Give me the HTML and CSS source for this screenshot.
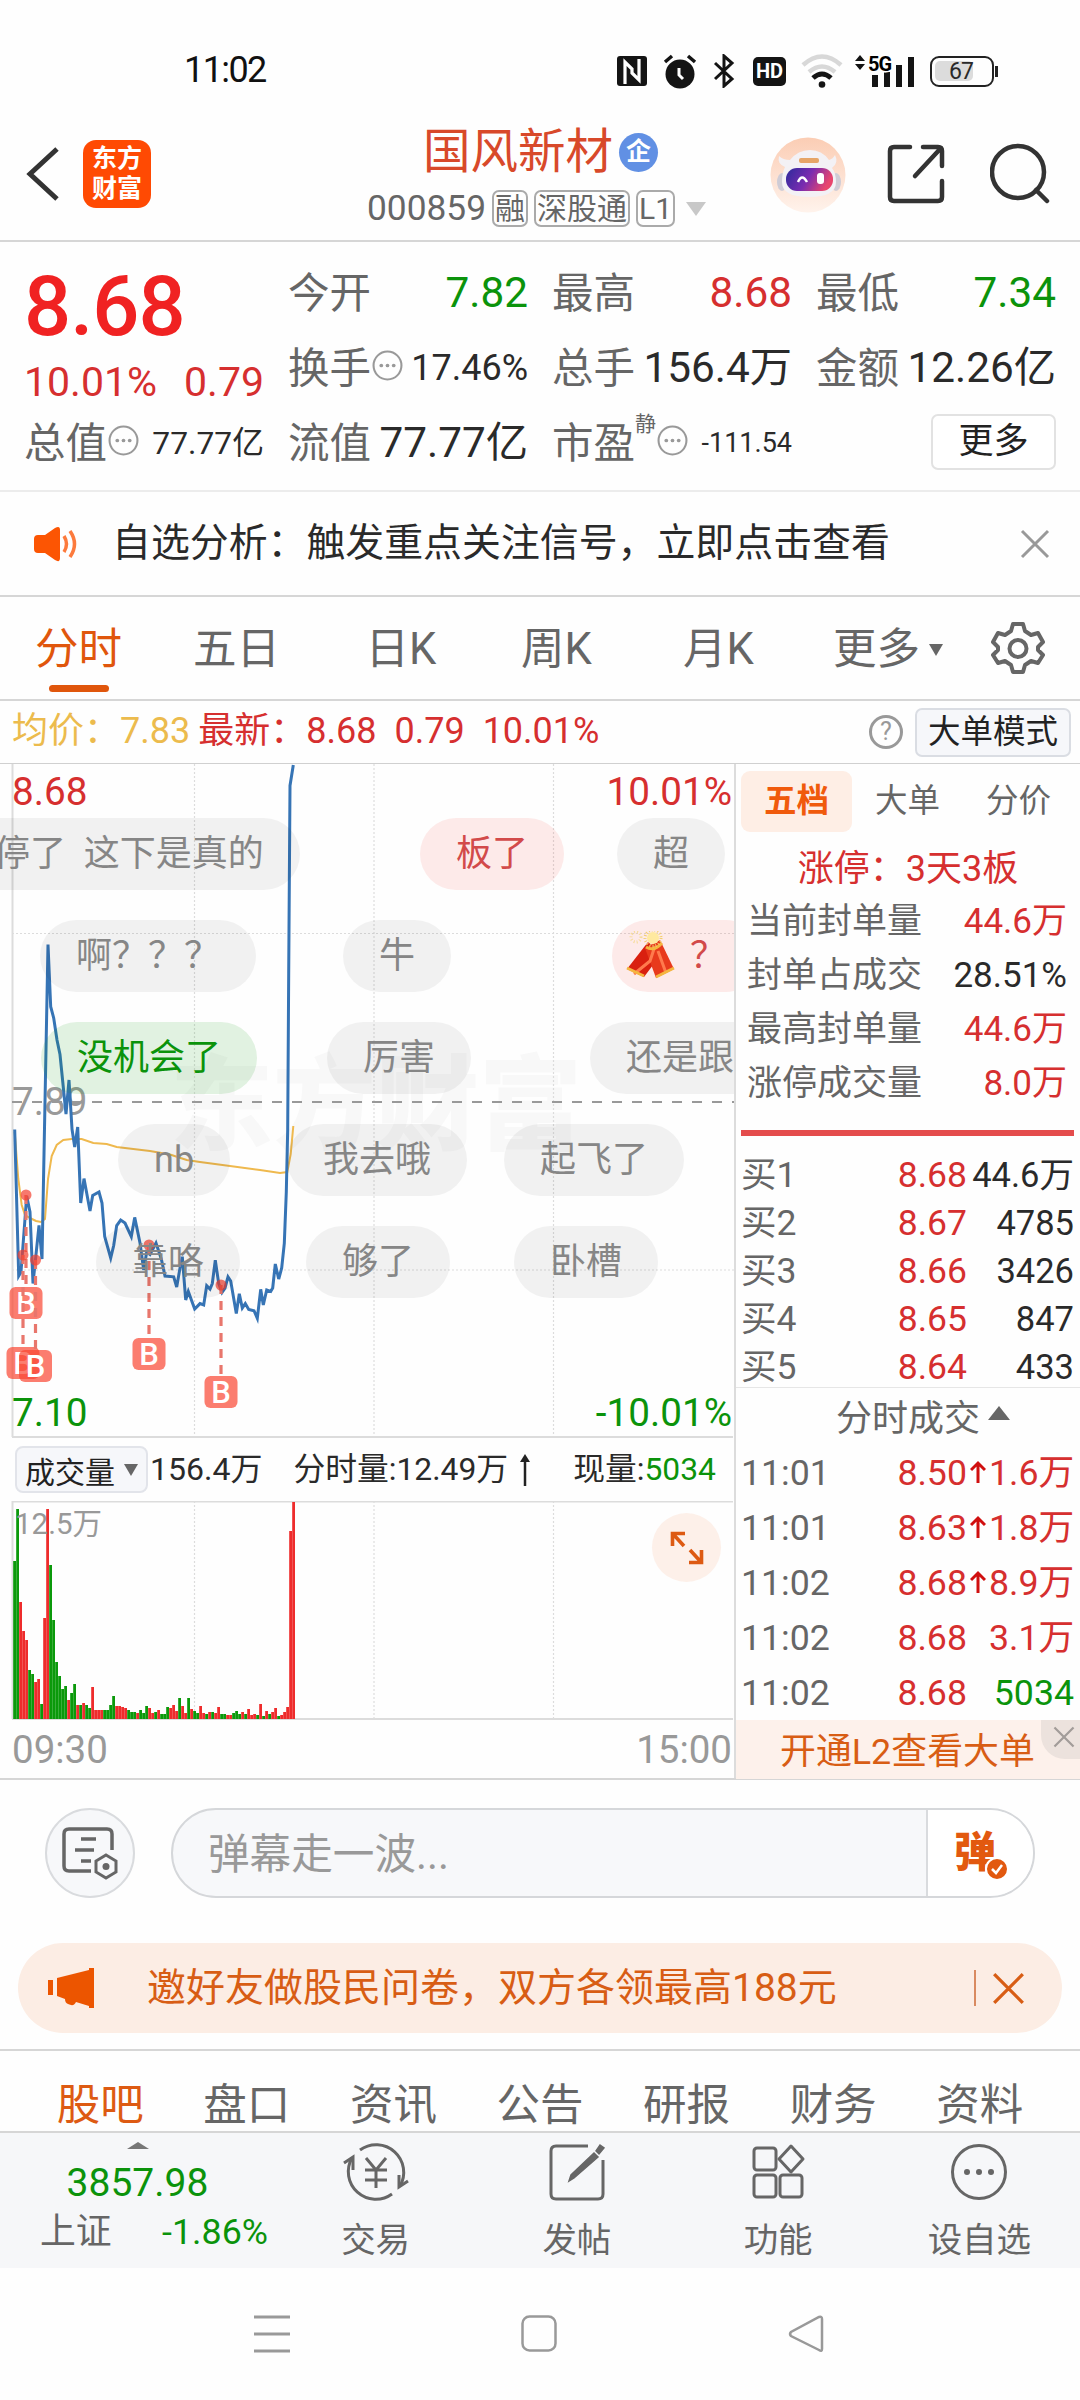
FILE: index.html
```html
<!DOCTYPE html>
<html lang="zh-CN">
<head>
	<meta charset="utf-8">
	<title>国风新材 000859</title>
	<link rel="stylesheet" href="styles.css">
</head>
<body>
	<svg class="defs" width="0" height="0">
		<symbol id="dots" viewBox="0 0 30 30">
			<circle cx="15" cy="15" r="13.5" fill="none" stroke="#999" stroke-width="2"/>
			<circle cx="9" cy="15" r="1.8" fill="#999"/><circle cx="15" cy="15" r="1.8" fill="#999"/><circle cx="21" cy="15" r="1.8" fill="#999"/>
		</symbol>
		<symbol id="cross" viewBox="0 0 30 30">
			<path d="M2 2L28 28M28 2L2 28" fill="none" stroke="currentColor" stroke-width="3"/>
		</symbol>
		<symbol id="up" viewBox="0 0 16 24">
			<path d="M8 23V3M1 10L8 3L15 10" fill="none" stroke="#d00f0f" stroke-width="3"/>
		</symbol>
	</svg>

	<div class="statusBar">
		<span class="clock">11:02</span>
		<div class="sysIcons">
			<svg class="nfc" width="30" height="31" viewBox="0 0 30 31"><rect width="30" height="30" rx="3" fill="#141414"/><path d="M8 28V6L15 13V17L22 24V3" fill="none" stroke="#fff" stroke-width="3.200"/></svg>
			<svg class="alarm" width="34" height="35" viewBox="0 0 34 35"><circle cx="17" cy="20" r="14.500" fill="#141414"/><path d="M2 8L9 2M32 8L25 2" stroke="#141414" stroke-width="3.500"/><path d="M16 14V21L20 25" fill="none" stroke="#fff" stroke-width="3"/></svg>
			<svg class="bt" width="22" height="34" viewBox="0 0 22 34"><path d="M2 9L19 25L11 32V2L19 9L2 25" fill="none" stroke="#141414" stroke-width="3"/></svg>
			<span class="hd">HD</span>
			<svg class="wifi" width="42" height="34" viewBox="0 0 42 34"><path d="M2 11Q21 -6 40 11M8 18Q21 7 34 18" fill="none" stroke="#d8d8d8" stroke-width="4.500"/><path d="M12 24Q21 16 30 24" fill="none" stroke="#141414" stroke-width="5"/><circle cx="21" cy="30.500" r="3.300" fill="#141414"/></svg>
			<svg class="signal" width="60" height="34" viewBox="0 0 60 34"><path d="M0 7L5 1L10 7ZM0 10L5 16L10 10Z" fill="#141414"/><path d="M20 21V33M32 18V33M44 11V33M56 3V33" stroke="#141414" stroke-width="6"/><text x="13" y="17" class="fiveG">5G</text></svg>
			<div class="battery"><span>67</span></div>
		</div>
	</div>

	<div class="header">
		<svg class="back" width="34" height="56" viewBox="0 0 34 56"><path d="M31 3L4 28L31 53" fill="none" stroke="#333" stroke-width="5"/></svg>
		<div class="logo">东方<br>财富</div>
		<div class="stock">
			<div class="stockName">国风新材<span class="qi">企</span></div>
			<div class="stockCode">000859<span class="tag">融</span><span class="tag">深股通</span><span class="tag">L1</span><i class="tri"></i></div>
		</div>
		<svg class="robot" width="76" height="76" viewBox="0 0 76 76">
			<defs>
				<linearGradient id="halo" x1="0" y1="0" x2="0" y2="1"><stop offset="0" stop-color="#fbcdb4"/><stop offset="1" stop-color="#fff3ec"/></linearGradient>
				<linearGradient id="visor" x1="0" y1="0" x2="1" y2=".3"><stop offset="0" stop-color="#2c2a9c"/><stop offset=".55" stop-color="#7a2cb0"/><stop offset="1" stop-color="#e8456e"/></linearGradient>
			</defs>
			<circle cx="38" cy="38" r="37.500" fill="url(#halo)"/>
			<ellipse cx="12" cy="45" rx="5" ry="9" fill="#cfccd6"/><ellipse cx="66" cy="45" rx="5" ry="9" fill="#cfccd6"/>
			<path d="M15 30Q7 27 9 19Q13 23 20 23Q28 13 40 13Q52 13 59 23Q63 22 65 18Q69 26 62 31Q66 36 66 45Q66 60 39 60Q12 60 12 45Q12 36 15 30Z" fill="#f3f1f5"/>
			<rect x="29" y="21" width="20" height="5" rx="2" fill="#e6a568"/>
			<rect x="16" y="31" width="47" height="23" rx="11" fill="url(#visor)"/>
			<path d="M28 45Q32 36 37 45" fill="none" stroke="#fff" stroke-width="2.500"/><rect x="47" y="36" width="7" height="11" rx="3" fill="#fff"/>
		</svg>
		<svg class="share" width="58" height="60" viewBox="0 0 58 60"><path d="M23 3H7Q3 3 3 7V53Q3 57 7 57H51Q55 57 55 53V37M36 3H51Q55 3 55 7V22M54 4L28 32" fill="none" stroke="#333" stroke-width="4.500" stroke-linecap="round"/></svg>
		<svg class="search" width="60" height="62" viewBox="0 0 60 62"><circle cx="28" cy="29" r="26" fill="none" stroke="#333" stroke-width="4.500"/><path d="M46 47L57 58" stroke="#333" stroke-width="4.500" stroke-linecap="round"/></svg>
	</div>

	<div class="quote">
		<div class="quoteCol first">
			<div class="bigPrice">8.68</div>
			<div class="change red"><span>10.01%</span><span>0.79</span></div>
			<div class="cell"><label>总值</label><svg class="dots"><use href="#dots"/></svg><b class="s31">77.77亿</b></div>
		</div>
		<div class="quoteCol">
			<div class="cell"><label>今开</label><b class="green">7.82</b></div>
			<div class="cell"><label>换手</label><svg class="dots"><use href="#dots"/></svg><b class="s35">17.46%</b></div>
			<div class="cell"><label>流值</label><b>77.77亿</b></div>
		</div>
		<div class="quoteCol">
			<div class="cell"><label>最高</label><b class="red">8.68</b></div>
			<div class="cell"><label>总手</label><b>156.4万</b></div>
			<div class="cell"><label>市盈</label><sup>静</sup><svg class="dots"><use href="#dots"/></svg><b class="s27">-111.54</b></div>
		</div>
		<div class="quoteCol">
			<div class="cell"><label>最低</label><b class="green">7.34</b></div>
			<div class="cell"><label>金额</label><b>12.26亿</b></div>
			<div class="cell"><button class="moreBtn">更多</button></div>
		</div>
	</div>

	<div class="notice">
		<svg width="46" height="36" viewBox="0 0 46 36"><path d="M1 13Q1 9 5 9H12L22 2Q27 -1 27 4V32Q27 37 22 34L12 27H5Q1 27 1 23Z" fill="#fc5503"/><path d="M31 10Q36 18 31 26M37 5Q46 18 37 31" fill="none" stroke="#fc7a3c" stroke-width="3.500"/></svg>
		<span>自选分析：触发重点关注信号，立即点击查看</span>
		<svg class="close" width="30" height="30"><use href="#cross"/></svg>
	</div>

	<div class="periods">
		<span class="on">分时</span><span>五日</span><span>日K</span><span>周K</span><span>月K</span><span>更多<i class="tri dark"></i></span>
		<svg width="54" height="54" viewBox="0 0 54 54"><path d="M22 3H32L34 10L40 14L47 12L52 21L47 26V29L52 34L47 42L40 40L34 44L32 51H22L20 44L14 40L7 42L2 34L7 29V26L2 21L7 12L14 14L20 10Z" fill="none" stroke="#666" stroke-width="4" stroke-linejoin="round"/><circle cx="27" cy="27.500" r="8.500" fill="none" stroke="#666" stroke-width="4"/></svg>
	</div>

	<div class="infoLine">
		<span class="avg">均价：7.83</span>
		<span class="red latest">最新：<em>8.68</em><em>0.79</em><em>10.01%</em></span>
		<span class="help">?</span>
		<button class="modeBtn">大单模式</button>
	</div>

	<div class="main">
		<div class="charts">
			<div class="priceChart">
				<div class="watermark">东方财富</div>
				<svg width="734" height="674" viewBox="0 0 734 674">
					<g class="grid">
						<path d="M194.500 0V674M374 0V674M553.500 0V674M12 169.500H734M12 506H734"/>
					</g>
					<path class="frame" d="M12.500 0V673M12 673H733"/>
					<path class="middle" d="M12 338H734"/>
					<text x="12" y="351" class="axis grey">7.89</text>
					<polyline class="avgLine" points="14.7,368 18.3,415 21.7,441 25,451 30,454 36,457 41,458 45,455 48,415 51.7,392 56.7,381 63.3,376 71.7,375 81.7,375 93.3,379 106.7,380 116.7,383 133.3,385 150,387 170,390.5 186.7,396 200,398 230,402 260,406 280,409 287.3,408 290.7,390 293.3,362"/>
					<polyline class="priceLine" points="14.7,365.5 18.7,512 21,508 26.7,432 30,448 33,519.5 39,461.5 42,495 48,180.6 50.7,242.7 53.7,254 57,276 60,290.5 66,350 69,316 72,365 74.7,383 77.7,363 80.7,439 84,414.6 90,447 92.7,431.5 99,428 102,439 104.7,472.6 110.7,494 113.7,481.5 116.7,461.5 120.7,456 125,459 131.3,472.6 134.7,453.4 140,479 143.700,506 146.7,488 150,490.5 156,479 161.3,495 165,512 173.7,512.8 176.7,523 180,504 182.3,492.7 185.7,536 188.3,527.5 194.7,545 200,539.6 203.7,541 206.7,521.7 210,525 212.3,519.5 215.3,496.3 218.7,519.5 222,528.4 225,524 228,512.8 230.7,517 236.3,549.4 239.3,529.8 242.3,544 245.3,539.6 248.7,545.4 254,546.7 257.3,554.3 260.7,525.3 263.3,541 266.7,526 270.7,527.5 272.7,524 275.3,500 278.7,515 281.7,504 284.3,479.3 286.3,428 287.7,365.5 288.7,209 290,21.7 293.3,1"/>
					<g id="trades"></g>
					<text x="12" y="41" class="axis up">8.68</text>
					<text x="732" y="41" class="axis up end">10.01%</text>
					<text x="12" y="662" class="axis down">7.10</text>
					<text x="732" y="662" class="axis down end">-10.01%</text>
				</svg>
				<div id="danmaku" class="danmaku"></div>
			</div>
			<div class="volInfo">
				<button class="volBtn">成交量<i class="tri dark"></i></button>
				<span class="total">156.4万</span>
				<span class="minute">分时量:12.49万</span>
				<svg width="10" height="32" viewBox="0 0 10 32"><path d="M5 32V5" stroke="#222" stroke-width="2.500"/><path d="M0 8L5 0L10 8Z" fill="#222"/></svg>
				<span class="now">现量:<span class="green">5034</span></span>
			</div>
			<div class="volChart">
				<svg width="734" height="219" viewBox="0 0 734 219">
					<path class="grid" d="M194.500 0V217M374 0V217M553.500 0V217"/>
					<path class="frame" d="M12.500 0V218M12 .500H733M12 218H733"/>
					<g id="volumes"></g>
					<text x="15" y="33" class="volMax">12.5万</text>
				</svg>
				<span class="expand"><svg width="34" height="34" viewBox="0 0 34 34"><path d="M15 2.500H2.500V15M3 3L14 15M19 31.500H31.500V19M31 31L20 19" fill="none" stroke="#dd5a12" stroke-width="3.600"/></svg></span>
			</div>
			<div class="times"><span>09:30</span><span>15:00</span></div>
		</div>

		<div class="side">
			<div class="sideTabs"><span class="on">五档</span><span>大单</span><span>分价</span></div>
			<div class="limit">涨停：3天3板</div>
			<dl class="seal">
				<dt>当前封单量</dt><dd class="red">44.6万</dd>
				<dt>封单占成交</dt><dd>28.51%</dd>
				<dt>最高封单量</dt><dd class="red">44.6万</dd>
				<dt>涨停成交量</dt><dd class="red">8.0万</dd>
			</dl>
			<div class="ratio"></div>
			<div class="book" id="book"></div>
			<div class="ticksTitle">分时成交<i class="tri upTri"></i></div>
			<div class="ticks" id="ticks"></div>
			<div class="l2">开通L2查看大单<span class="l2Close"><svg width="22" height="22"><use href="#cross"/></svg></span></div>
		</div>
	</div>

	<div class="barrage">
		<span class="round"><svg width="58" height="54" viewBox="0 0 58 54"><path d="M30 45H8Q3 45 3 40V8Q3 3 8 3H46Q51 3 51 8V24" fill="none" stroke="#666" stroke-width="3.500"/><path d="M20 13H35M14 24H33M20 35H30" stroke="#666" stroke-width="3.500"/><path d="M45 29L55 35V46L45 52L35 46V35Z" fill="none" stroke="#666" stroke-width="3"/><circle cx="45" cy="40.500" r="3.500" fill="#666"/></svg></span>
		<div class="inputBox">
			<span class="placeholder">弹幕走一波...</span>
			<span class="send">弹<svg width="24" height="24" viewBox="0 0 24 24"><circle cx="12" cy="12" r="11" fill="#e2590f" stroke="#fff" stroke-width="2"/><path d="M7 12L11 16L17 8" fill="none" stroke="#fff" stroke-width="2.500"/></svg></span>
		</div>
	</div>

	<div class="promo">
		<svg width="46" height="40" viewBox="0 0 46 40"><path d="M0 12H5V27H0ZM9 10L41 2V0H46V40H41V38L28 34Q26 39 20 36Q17 35 17 31L9 28Z" fill="#ec5500"/></svg>
		<span>邀好友做股民问卷，双方各领最高188元</span>
		<i class="bar"></i>
		<svg class="close" width="33" height="33"><use href="#cross"/></svg>
	</div>

	<div class="sections">
		<span class="on">股吧</span><span>盘口</span><span>资讯</span><span>公告</span><span>研报</span><span>财务</span><span>资料</span>
	</div>

	<div class="bottomBar">
		<div class="index">
			<i class="tri upTri small"></i>
			<div class="indexValue green">3857.98</div>
			<div class="indexRow"><span>上证</span><span class="green">-1.86%</span></div>
		</div>
		<div class="action">
			<svg width="66" height="60" viewBox="0 0 66 60"><path d="M17 8A27.500 27.500 0 0 1 57 44M49 52A27.500 27.500 0 0 1 9 16" fill="none" stroke="#666" stroke-width="3"/><path d="M1 21L10 15V28M65 39L56 45V33" fill="none" stroke="#666" stroke-width="3"/><path d="M23 16L33 28L43 16M22 28H44M22 38H44M33 28V46" fill="none" stroke="#666" stroke-width="3"/></svg>
			交易
		</div>
		<div class="action">
			<svg width="60" height="60" viewBox="0 0 60 60"><path d="M41 4H9Q4 4 4 9V52Q4 57 9 57H51Q56 57 56 52V18" fill="none" stroke="#666" stroke-width="3"/><path d="M49 9L53 3L57 6L52 12ZM47 11L51 15L27 36L22 39L24 33Z" fill="#666" stroke="#666" stroke-width="1.500"/></svg>
			发帖
		</div>
		<div class="action">
			<svg width="56" height="60" viewBox="0 0 56 60"><g fill="none" stroke="#666" stroke-width="3"><rect x="4" y="6" width="22" height="22" rx="3"/><path d="M41 4L53 17L41 30L29 17Z" stroke-linejoin="round"/><rect x="4" y="33" width="22" height="22" rx="3"/><rect x="30" y="33" width="22" height="22" rx="3"/></g></svg>
			功能
		</div>
		<div class="action">
			<svg width="60" height="60" viewBox="0 0 60 60"><circle cx="30" cy="30" r="26.500" fill="none" stroke="#666" stroke-width="3"/><g fill="#666"><circle cx="18" cy="30" r="3"/><circle cx="30" cy="30" r="3"/><circle cx="42" cy="30" r="3"/></g></svg>
			设自选
		</div>
	</div>

	<div class="navBar">
		<svg width="36" height="38" viewBox="0 0 36 38"><path d="M0 2H36M0 19H36M0 36H36" stroke="#999" stroke-width="3"/></svg>
		<svg width="36" height="38" viewBox="0 0 36 38"><rect x="1.500" y="1.500" width="33" height="34" rx="7" fill="none" stroke="#999" stroke-width="2.500"/></svg>
		<svg width="36" height="38" viewBox="0 0 36 38"><path d="M34 4V34Q34 37 31 35L3 21Q1 19 3 17L31 2Q34 1 34 4Z" fill="none" stroke="#999" stroke-width="2.500"/></svg>
	</div>
	<script src="app.js"></script>
</body>
</html>
```
FILE: styles.css
```css
html, body {
	margin: 0;
	background: #fefefe;
	color: #2a2a2a;
	font-family: Roboto, "Noto Sans CJK SC", sans-serif;
	line-height: 1.2;
}
body {
	width: 1080px;
	height: 2400px;
	overflow: hidden;
}
* {
	box-sizing: border-box;
}
svg {
	display: block;
	flex: none;
}
span, b, label, button {
	white-space: nowrap;
}
button {
	font-family: inherit;
	padding: 0;
	color: #222;
}
i, em {
	font-style: normal;
}
.defs {
	position: absolute;
}
.red {
	color: #d62f2f;
}
.green {
	color: #0b930b;
}
.tri {
	display: inline-block;
	border: solid transparent;
	border-width: 14px 10.5px 0;
	border-top-color: #c8c8c8;
}
.tri.dark {
	border-width: 12px 7px 0;
	border-top-color: #666;
}
.tri.upTri {
	border-width: 0 11px 14px;
	border-bottom-color: #666;
}
.tri.small {
	border-width: 0 11px 7px;
	border-bottom-color: #777;
}

/* status bar */
.statusBar {
	height: 126px;
	padding: 16px 86px 0 184px;
	display: flex;
	align-items: center;
	justify-content: space-between;
}
.clock {
	font-size: 36px;
	letter-spacing: -1.6px;
	color: #111;
}
.sysIcons {
	display: flex;
	align-items: center;
}
.alarm {
	margin-left: 16px;
}
.bt {
	margin-left: 16px;
}
.hd {
	margin-left: 18px;
	width: 33px;
	height: 29px;
	line-height: 29px;
	border-radius: 5px;
	background: #141414;
	color: #fff;
	font-size: 20px;
	font-weight: 700;
	text-align: center;
}
.wifi {
	margin-left: 15px;
}
.signal {
	margin-left: 12px;
}
.fiveG {
	font-size: 20px;
	font-weight: 700;
	letter-spacing: -1px;
	paint-order: stroke;
	stroke: #fff;
	stroke-width: 3px;
}
.battery {
	margin-left: 15px;
	position: relative;
	width: 64px;
	height: 31px;
	padding: 3px;
	border: 2.5px solid #222;
	border-radius: 9px;
}
.battery span {
	display: block;
	width: 38px;
	height: 20px;
	padding-left: 14px;
	line-height: 21px;
	font-size: 23px;
	letter-spacing: -1px;
	background: #dcdcdc;
	border-radius: 5px;
}
.battery:after {
	content: "";
	position: absolute;
	right: -6px;
	top: 8px;
	width: 3px;
	height: 11px;
	background: #222;
}

/* header */
.header {
	height: 116px;
	padding-left: 26px;
	border-bottom: 2px solid #d6d6d6;
	display: flex;
}
.back {
	margin-top: 20px;
}
.logo {
	width: 68px;
	height: 68px;
	margin: 14px 0 0 23px;
	padding-top: 4px;
	border-radius: 13px;
	background: #ff4a03;
	color: #fff;
	font-size: 25px;
	font-weight: 700;
	line-height: 30px;
	text-align: center;
}
.stock {
	margin-left: 216px;
	width: 370px;
}
.stockName {
	padding-left: 56px;
	display: flex;
	align-items: center;
	height: 52px;
	font-size: 47.500px;
	line-height: 54px;
	color: #d8492a;
}
.qi {
	width: 39px;
	height: 39px;
	margin: 0 0 0 6px;
	border-radius: 50%;
	background: #6190e4;
	color: #fff;
	font-size: 25px;
	font-weight: 700;
	line-height: 37px;
	text-align: center;
}
.stockCode {
	margin-top: 12px;
	display: flex;
	align-items: center;
	height: 37px;
	font-size: 35.300px;
	color: #666;
}
.tag {
	height: 37px;
	margin-left: 6px;
	padding: 0 1px;
	border: 2px solid #aaa;
	border-radius: 7px;
	font-size: 30px;
	line-height: 33px;
}
.stockCode .tri {
	margin-left: 11px;
}
.robot {
	margin: 11px 0 0 33px;
}
.share {
	margin: 18px 0 0 41px;
}
.search {
	margin: 17px 0 0 45px;
}

/* quote block */
.quote {
	height: 250px;
	padding: 14px 24px 0;
	border-bottom: 2px solid #ececec;
	display: grid;
	grid-template-columns: repeat(4, 240px);
	column-gap: 24px;
}
.cell {
	height: 75px;
	display: flex;
	align-items: center;
}
.cell label {
	font-size: 41.500px;
	color: #666;
}
.cell b {
	margin-left: auto;
	font-size: 42.300px;
	font-weight: 400;
}
.cell b.s35 {
	font-size: 36px;
}
.cell b.s31 {
	font-size: 31.800px;
}
.cell b.s27 {
	font-size: 27px;
}
.cell sup {
	align-self: flex-start;
	margin-top: 0;
	font-size: 21px;
	line-height: 36px;
	color: #666;
}
.dots {
	width: 31px;
	height: 31px;
	margin: -6px 0 0 1px;
}
.bigPrice {
	height: 96px;
	line-height: 101px;
	font-size: 83px;
	font-weight: 500;
	color: #f02222;
	letter-spacing: -1px;
}
.change {
	height: 54px;
	line-height: 60px;
	display: flex;
	justify-content: space-between;
	font-size: 41px;
}
.moreBtn {
	width: 125px;
	height: 56px;
	margin-left: auto;
	border: 2px solid #e2e2e2;
	border-radius: 7px;
	background: #fff;
	font-size: 35px;
	line-height: 50px;
}
.cell .moreBtn {
	margin-top: -4px;
}

.notice {
	height: 105px;
	padding: 0 30px 0 33px;
	border-bottom: 2px solid #d6d6d6;
	display: flex;
	align-items: center;
	font-size: 38.900px;
}
.notice span {
	margin-left: 33px;
}
.notice .close {
	margin-left: auto;
	color: #999;
}

.periods {
	height: 104px;
	border-bottom: 2px solid #d6d6d6;
	display: grid;
	grid-template-columns: 157px 159px 170px 141px 183px 156px 103px;
	align-items: center;
	justify-items: center;
	font-size: 43.500px;
	color: #666;
}
.periods span {
	height: 102px;
	line-height: 106px;
}
.periods .on {
	color: #e0560c;
	display: flex;
	flex-direction: column;
	align-items: center;
}
.periods .on:after {
	content: "";
	width: 60px;
	height: 7px;
	margin-top: -18px;
	border-radius: 4px;
	background: #e0560c;
}
.periods .tri {
	margin: 0 0 8px 9px;
}

.infoLine {
	height: 62px;
	padding: 0 9px 0 12px;
	display: flex;
	align-items: center;
	font-size: 36px;
}
.avg {
	color: #ecbb4d;
}
.latest {
	margin-left: 8px;
}
.latest em + em {
	margin-left: 18px;
}
.help {
	margin-left: auto;
	width: 34px;
	height: 34px;
	border: 3px solid #999;
	border-radius: 50%;
	color: #999;
	font-size: 25px;
	line-height: 28px;
	text-align: center;
}
.modeBtn {
	width: 156px;
	height: 49px;
	margin-left: 12px;
	border: 2px solid #dadde3;
	border-radius: 7px;
	background: #f6f7fa;
	font-size: 32.500px;
	line-height: 43px;
}

/* charts and order book */
.main {
	height: 1017px;
	border-top: 1px solid #d0d0d0;
	border-bottom: 2px solid #d6d6d6;
	display: flex;
}
.charts {
	width: 734px;
}
.priceChart {
	position: relative;
	height: 674px;
	overflow: hidden;
}
.priceChart svg {
	position: relative;
}
.grid {
	fill: none;
	stroke: #dcdcdc;
	stroke-width: 1.2;
	stroke-dasharray: 2 2;
}
.frame {
	fill: none;
	stroke: #dcdcdc;
	stroke-width: 2;
}
.middle {
	stroke: #999;
	stroke-width: 2;
	stroke-dasharray: 10 10;
}
.axis {
	font-size: 38.700px;
}
.axis.grey {
	fill: #999;
}
.axis.up {
	fill: #d62f2f;
}
.axis.down {
	fill: #0b930b;
}
.end {
	text-anchor: end;
}
.priceLine {
	fill: none;
	stroke: #3674b5;
	stroke-width: 3;
}
.avgLine {
	fill: none;
	stroke: #efb94e;
	stroke-width: 2;
}
.stem {
	stroke: #e8766c;
	stroke-width: 3.2;
	stroke-dasharray: 9 7;
}
.dot {
	fill: #f4402f;
	fill-opacity: .7;
}
.flag {
	fill: #fa4632;
	fill-opacity: .7;
}
.flagText {
	fill: #fff;
	font-size: 31px;
	font-weight: 500;
	text-anchor: middle;
}
.watermark {
	position: absolute;
	left: 170px;
	top: 273px;
	font-size: 103px;
	font-weight: 900;
	line-height: 140px;
	color: #f8f8f8;
}
.danmaku {
	position: absolute;
	left: 0;
	top: 0;
	width: 734px;
	height: 674px;
	overflow: hidden;
}
.pill {
	position: absolute;
	height: 72px;
	padding: 0 36px;
	border-radius: 36px;
	background: rgba(0, 0, 0, .05);
	color: #868686;
	font-size: 36px;
	line-height: 72px;
	white-space: pre;
}
.pill.hot {
	background: rgba(250, 60, 50, .1);
	color: #d24a4a;
}
.pill.cold {
	background: rgba(20, 160, 20, .12);
	color: #0b930b;
}
.pill.gift {
	display: flex;
	align-items: center;
	gap: 14px;
	padding-left: 14px;
}

.volInfo {
	height: 63px;
	padding-left: 15px;
	display: flex;
	align-items: center;
	font-size: 31.800px;
}
.volBtn {
	width: 133px;
	height: 47px;
	border: 2px solid #e2e4ea;
	border-radius: 8px;
	background: #f6f7fa;
	display: flex;
	align-items: center;
	justify-content: center;
	gap: 9px;
	font-size: 30px;
}
.total {
	margin-left: 2px;
	font-size: 32px;
}
.minute {
	margin: 0 12px 0 31px;
}
.now {
	margin-left: 43px;
}
.volChart {
	position: relative;
	height: 219px;
}
.volMax {
	fill: #999;
	font-size: 29.500px;
}
.barUp {
	fill: #ee2c2c;
}
.barDown {
	fill: #0b990b;
}
.expand {
	position: absolute;
	right: 13px;
	top: 12px;
	width: 69px;
	height: 69px;
	border-radius: 50%;
	background: #fdf0e9;
	display: flex;
	align-items: center;
	justify-content: center;
}
.times {
	height: 58px;
	padding: 2px 2px 0 12px;
	display: flex;
	align-items: center;
	justify-content: space-between;
	font-size: 38.500px;
	color: #999;
}

.side {
	width: 346px;
	border-left: 2px solid #dcdcdc;
}
.sideTabs {
	height: 67px;
	padding: 7px 5px 0 5px;
	display: grid;
	grid-template-columns: repeat(3, 111px);
	font-size: 32.500px;
	line-height: 61px;
	text-align: center;
	color: #666;
}
.sideTabs .on {
	border-radius: 9px;
	background: #feeee5;
	color: #f05a0c;
	font-weight: 700;
}
.limit {
	height: 64px;
	padding-top: 5px;
	line-height: 66px;
	font-size: 36px;
	text-align: center;
	color: #d62f2f;
}
.seal {
	margin: 0;
	height: 235px;
	padding: 0 13px 0 11px;
	display: grid;
	grid-template-columns: auto auto;
	grid-auto-rows: 54px;
	justify-content: space-between;
	line-height: 54px;
	font-size: 35px;
}
.seal dt {
	color: #666;
}
.seal dd {
	margin: 0;
	text-align: right;
}
.ratio {
	height: 6px;
	margin: 0 6px 15px 5px;
	background: #e44c4c;
}
.book {
	height: 237px;
	border-bottom: 1px solid #e6e6e6;
}
.bookRow {
	height: 48px;
	padding: 0 6px 0 5px;
	display: grid;
	grid-template-columns: 126px 100px 1fr;
	font-size: 35.500px;
	line-height: 48px;
}
.bookRow span:last-child {
	font-size: 34.500px;
}
.tickRow {
	height: 55px;
	padding: 0 6px 0 5px;
	display: grid;
	grid-template-columns: 126px 100px 22px 1fr;
	align-items: center;
	font-size: 35.700px;
}
.bookRow span:first-child, .tickRow span:first-child {
	color: #666;
}
.bookRow span + span, .tickRow span + span {
	text-align: right;
}
.tickRow svg {
	margin: -4px 0 0 3px;
}
.tickRow .qty {
	grid-column: 4;
}
.ticksTitle {
	height: 58px;
	padding-left: 100px;
	line-height: 62px;
	font-size: 36px;
	color: #666;
}
.ticksTitle .tri {
	margin: 0 0 11px 8px;
}
.ticks {
	height: 274px;
}
.l2 {
	position: relative;
	height: 59px;
	padding-left: 44px;
	background: #fdf1eb;
	color: #d85d14;
	font-size: 35.900px;
	line-height: 64px;
}
.l2Close {
	position: absolute;
	right: 0;
	top: 0;
	width: 39px;
	height: 39px;
	padding: 6px 0 0 12px;
	border-radius: 0 0 0 24px;
	background: #ece2dd;
	color: #a29c99;
}

/* barrage input */
.barrage {
	height: 163px;
	padding: 28px 45px 0;
	display: flex;
	gap: 36px;
}
.round {
	width: 90px;
	height: 90px;
	border: 2px solid #d9dbde;
	border-radius: 50%;
	background: #f7f8fa;
	display: flex;
	align-items: center;
	justify-content: center;
}
.inputBox {
	width: 864px;
	height: 90px;
	border: 2px solid #d5d7da;
	border-radius: 45px;
	background: #f7f8fa;
	display: flex;
	overflow: hidden;
	line-height: 90px;
}
.placeholder {
	flex: 1;
	padding-left: 35px;
	font-size: 41.600px;
	color: #999;
}
.send {
	position: relative;
	width: 107px;
	padding-left: 26px;
	border-left: 2px solid #d9dbde;
	background: #fff;
	color: #e2590f;
	font-size: 42px;
	font-weight: 900;
	line-height: 86px;
}
.send svg {
	position: absolute;
	left: 57px;
	top: 47px;
}

.promo {
	height: 90px;
	margin: 0 18px 16px;
	padding: 0 37px 0 30px;
	border-radius: 45px;
	background: #fcede4;
	color: #d85d14;
	display: flex;
	align-items: center;
	font-size: 39px;
}
.promo span {
	margin-left: 53px;
}
.promo .bar {
	width: 2px;
	height: 36px;
	margin: 0 16px 0 auto;
	background: #d98a60;
}

.sections {
	height: 84px;
	padding: 12px 27px 0;
	border-top: 2px solid #d6d6d6;
	border-bottom: 2px solid #d6d6d6;
	display: grid;
	grid-template-columns: repeat(7, 1fr);
	font-size: 43.500px;
	line-height: 85px;
	text-align: center;
	color: #666;
}
.sections .on {
	color: #dd5a12;
}

.bottomBar {
	height: 135px;
	background: #f6f7f9;
	display: grid;
	grid-template-columns: 275px repeat(4, 1fr);
	color: #666;
}
.index {
	display: flex;
	flex-direction: column;
	align-items: center;
	padding-top: 9px;
}
.indexValue {
	margin-top: 10px;
	font-size: 39px;
	line-height: 48px;
}
.indexRow {
	width: 228px;
	margin-left: 33px;
	display: flex;
	justify-content: space-between;
	font-size: 35.800px;
	line-height: 50px;
}
.action {
	padding-top: 9px;
	display: flex;
	flex-direction: column;
	align-items: center;
	font-size: 34.500px;
	line-height: 76px;
}

.navBar {
	height: 132px;
	padding: 47px 256px 0 254px;
	display: flex;
	justify-content: space-between;
}
```
FILE: app.js
```js
// minute volumes: height in px, g = down, r = up
let volumes = '158g 210g 117r 88r 79r 49g 45g 37r 40r 15g 101r 210r 154g 99g 57g 43g 30g 33g 19r 26g 35g 14r 14g 16r 14g 11g 32r 9r 9r 9r 9g 9g 14g 23g 13r 13r 12r 11r 9g 7g 7g 6r 9g 6g 13g 11r 6r 7g 9r 5g 5g 12g 11r 14r 8r 21g 13r 6r 21g 10r 8g 6g 13r 6r 5g 7r 7g 6r 12r 5g 5g 4r 4r 6g 8g 5g 7r 5g 10r 4r 5r 4g 15r 3g 8r 5g 7r 11r 3g 4r 7r 12r 188r 217r'.split(' ');

// left, row, text, style
let pills = [
	[-42, 0, '停了  这下是真的', ''],
	[420, 0, '板了', 'hot'],
	[617, 0, '超', ''],
	[40, 1, '啊？？？', ''],
	[343, 1, '牛', ''],
	[612, 1, '？', 'hot gift'],
	[41, 2, '没机会了', 'cold'],
	[327, 2, '厉害', ''],
	[590, 2, '还是跟', ''],
	[118, 3, 'nb', ''],
	[287, 3, '我去哦', ''],
	[504, 3, '起飞了', ''],
	[96, 4, '靠咯', ''],
	[306, 4, '够了', ''],
	[514, 4, '卧槽', '']
];

let cracker = '<svg width="50" height="50" viewBox="0 0 50 50">'
	+ '<path d="M22 11L36 22L18 46L1 38Z" fill="#d9200f"/><path d="M34 9L19 17L30 47L48 38Z" fill="#e83a1c"/>'
	+ '<path d="M29 15L24 30L8 43M32 20L40 42" fill="none" stroke="#ff7a4d" stroke-width="3"/>'
	+ '<path d="M1 37L18 45M30 46L48 37M20 16Q28 21 36 12" fill="none" stroke="#f4b640" stroke-width="3"/>'
	+ '<circle cx="27" cy="7" r="6" fill="#ffe9a0"/><circle cx="10" cy="6" r="5" fill="none" stroke="#f6dc9a" stroke-width="3" stroke-dasharray="1 2"/><circle cx="27" cy="7" r="8" fill="none" stroke="#f3cf70" stroke-width="3" stroke-dasharray="1 2"/></svg>';

// dot x, dot y, flag top
let trades = [
	[26, 431, 523],
	[23, 491, 583],
	[35.5, 496, 586],
	[149, 481, 574],
	[221, 521, 612]
];

let book = [
	['买1', '8.68', '44.6万'],
	['买2', '8.67', '4785'],
	['买3', '8.66', '3426'],
	['买4', '8.65', '847'],
	['买5', '8.64', '433']
];

let ticks = [
	['11:01', '8.50', true, '1.6万', 'red'],
	['11:01', '8.63', true, '1.8万', 'red'],
	['11:02', '8.68', true, '8.9万', 'red'],
	['11:02', '8.68', false, '3.1万', 'red'],
	['11:02', '8.68', false, '5034', 'green']
];

let html = '';
volumes.forEach(function(v, i){
	let h = parseInt(v);
	let cls = v.slice(-1) === 'r' ? 'barUp' : 'barDown';
	html += '<rect class="'+cls+'" x="'+(13.2+i*3)+'" y="'+(218-h)+'" width="2.8" height="'+h+'"/>';
});
document.querySelector('#volumes').innerHTML = html;

html = '';
trades.forEach(function(t){
	html += '<path class="stem" d="M'+t[0]+' '+t[1]+'V'+t[2]+'"/>';
	html += '<circle class="dot" cx="'+t[0]+'" cy="'+t[1]+'" r="5.5"/>';
	html += '<rect class="flag" x="'+(t[0]-16.5)+'" y="'+t[2]+'" width="33" height="32" rx="6"/>';
	html += '<text class="flagText" x="'+t[0]+'" y="'+(t[2]+27)+'">B</text>';
});
document.querySelector('#trades').innerHTML = html;

html = '';
pills.forEach(function(p){
	let icon = p[3].indexOf('gift') > -1 ? cracker : '';
	html += '<div class="pill '+p[3]+'" style="left:'+p[0]+'px;top:'+(54+p[1]*102)+'px">'+icon+p[2]+'</div>';
});
document.querySelector('#danmaku').innerHTML = html;

html = '';
book.forEach(function(b){
	html += '<div class="bookRow"><span>'+b[0]+'</span><span class="red">'+b[1]+'</span><span>'+b[2]+'</span></div>';
});
document.querySelector('#book').innerHTML = html;

html = '';
ticks.forEach(function(t){
	let arrow = t[2] ? '<svg width="16" height="24"><use href="#up"/></svg>' : '';
	html += '<div class="tickRow"><span>'+t[0]+'</span><span class="red">'+t[1]+'</span>'+arrow+'<span class="qty '+t[4]+'">'+t[3]+'</span></div>';
});
document.querySelector('#ticks').innerHTML = html;
```
